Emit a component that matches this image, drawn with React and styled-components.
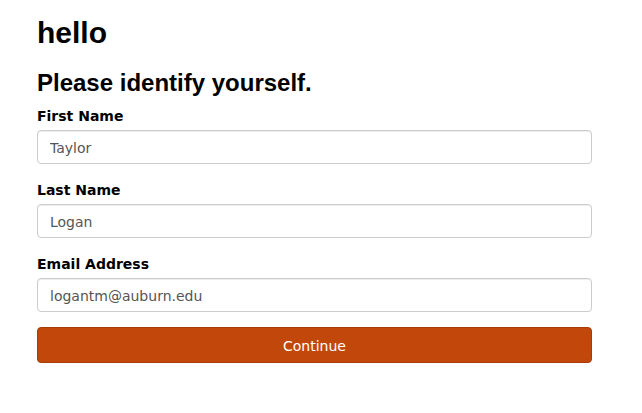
import React from "react";
import styled, { createGlobalStyle } from "styled-components";

const Global = createGlobalStyle`
  html, body { margin: 0; padding: 0; background: #fff; }
  body { font-family: "DejaVu Sans", Verdana, sans-serif; }
`;

const Page = styled.div`
  width: 555px;
  padding: 16px 0 0 37px;
  display: flex;
  flex-direction: column;
`;

const Title = styled.h1`
  font-family: "Liberation Sans", Arial, sans-serif;
  font-weight: bold;
  font-size: 30px;
  line-height: 34px;
  margin: 0 0 19px;
  color: #000;
`;

const Subtitle = styled.h2`
  font-family: "Liberation Sans", Arial, sans-serif;
  font-weight: bold;
  font-size: 24px;
  line-height: 28px;
  margin: 0 0 10px;
  color: #000;
`;

const Form = styled.form`
  display: flex;
  flex-direction: column;
`;

const Field = styled.div`
  display: flex;
  flex-direction: column;
  margin-bottom: 17px;
`;

const Label = styled.label`
  font-family: "DejaVu Sans", Verdana, sans-serif;
  font-weight: bold;
  font-size: 14px;
  line-height: 18px;
  color: #000;
  margin-bottom: 5px;
`;

const Input = styled.input`
  box-sizing: border-box;
  height: 34px;
  width: 100%;
  padding: 2px 12px 0;
  font-family: "DejaVu Sans", Verdana, sans-serif;
  font-size: 14px;
  color: #555;
  border: 1px solid #ccc;
  border-radius: 4px;
  background: #fff;
  box-shadow: inset 0 1px 1px rgba(0,0,0,0.075);
  outline: none;
`;

const Button = styled.button`
  box-sizing: border-box;
  height: 36px;
  width: 100%;
  margin-top: -2px;
  padding: 2px 12px 0;
  font-family: "DejaVu Sans", Verdana, sans-serif;
  font-size: 14px;
  color: #fff;
  background: #c1470a;
  border: 1px solid #a63c08;
  border-radius: 4px;
  cursor: pointer;
`;

export default function App() {
  return (
    <>
      <Global />
      <Page>
        <Title>hello</Title>
        <Subtitle>Please identify yourself.</Subtitle>
        <Form onSubmit={(e) => e.preventDefault()}>
          <Field>
            <Label>First Name</Label>
            <Input defaultValue="Taylor" />
          </Field>
          <Field>
            <Label>Last Name</Label>
            <Input defaultValue="Logan" />
          </Field>
          <Field>
            <Label>Email Address</Label>
            <Input defaultValue="logantm@auburn.edu" />
          </Field>
          <Button type="submit">Continue</Button>
        </Form>
      </Page>
    </>
  );
}
